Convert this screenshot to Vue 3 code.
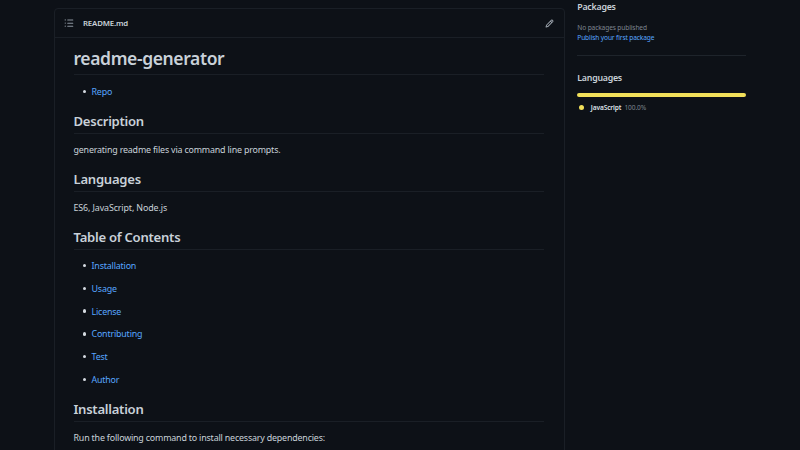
<script setup>
const contents = ['Installation', 'Usage', 'License', 'Contributing', 'Test', 'Author']
</script>

<template>
  <div class="page">
    <main class="readme">
      <header class="bar">
        <svg class="list-icon" viewBox="0 0 16 16" fill="currentColor">
          <path d="M2 4a1 1 0 100-2 1 1 0 000 2zm3.75-1.5a.75.75 0 000 1.5h8.5a.75.75 0 000-1.5h-8.5zm0 5a.75.75 0 000 1.5h8.5a.75.75 0 000-1.5h-8.5zm0 5a.75.75 0 000 1.5h8.5a.75.75 0 000-1.5h-8.5zM3 8a1 1 0 11-2 0 1 1 0 012 0zm-1 6a1 1 0 100-2 1 1 0 000 2z" />
        </svg>
        <span class="file">README.md</span>
        <svg class="pencil" viewBox="0 0 16 16" fill="currentColor">
          <path fill-rule="evenodd" d="M11.013 1.427a1.75 1.75 0 012.474 0l1.086 1.086a1.75 1.75 0 010 2.474l-8.61 8.61c-.21.21-.47.364-.756.445l-3.251.93a.75.75 0 01-.927-.928l.929-3.25a1.75 1.75 0 01.445-.758l8.61-8.61zm1.414 1.06a.25.25 0 00-.354 0L10.811 3.75l1.439 1.44 1.263-1.263a.25.25 0 000-.354l-1.086-1.086zM11.189 6.25L9.75 4.81l-6.286 6.287a.25.25 0 00-.064.108l-.558 1.953 1.953-.558a.249.249 0 00.108-.064l6.286-6.286z" />
        </svg>
      </header>
      <article class="body">
        <h1>readme-generator</h1>
        <ul class="repo"><li><a>Repo</a></li></ul>
        <h2>Description</h2>
        <p>generating readme files via command line prompts.</p>
        <h2>Languages</h2>
        <p class="stack">ES6, JavaScript, Node.js</p>
        <h2>Table of Contents</h2>
        <ul class="toc">
          <li v-for="item in contents" :key="item"><a>{{ item }}</a></li>
        </ul>
        <h2>Installation</h2>
        <p>Run the following command to install necessary dependencies:</p>
      </article>
    </main>
    <aside class="side">
      <h3>Packages</h3>
      <div class="note">No packages published</div>
      <a class="publish">Publish your first package</a>
      <div class="divider"></div>
      <h3>Languages</h3>
      <div class="meter"></div>
      <div class="lang"><i></i><b>JavaScript</b><span>100.0%</span></div>
    </aside>
  </div>
</template>

<style>
body { background: #0d1117; }
</style>

<style scoped>
.page {
  box-sizing: border-box;
  width: 800px;
  height: 450px;
  overflow: hidden;
  display: flex;
  align-items: flex-start;
  gap: 12.3px;
  padding-left: 54px;
  background: #0d1117;
  color: #c9d1d9;
  font-family: "Noto Sans", "Open Sans", sans-serif;
  font-size: 8.9px;
  letter-spacing: -0.18px;
}
h1, h2, h3, p, ul { margin: 0; padding: 0; }
a { color: #58a6ff; }
.readme {
  box-sizing: border-box;
  width: 511px;
  height: 460px;
  margin-top: 8px;
  border: 1px solid #1a1f26;
  border-radius: 4px;
  flex: none;
}
.bar {
  display: flex;
  align-items: center;
  box-sizing: border-box;
  height: 29px;
  padding: 0 10px 0 9px;
  border-bottom: 1px solid #1a1f26;
}
.list-icon { width: 10px; height: 10px; color: #8b949e; }
.file { margin-left: 9px; font-size: 7.8px; font-weight: 600; letter-spacing: -0.15px; flex: 1; }
.pencil { width: 9px; height: 9px; color: #a5adb6; }
.body { padding: 8px 20px 0 18.5px; }
h1 {
  box-sizing: border-box;
  height: 29px;
  line-height: 25px;
  font-size: 17.5px;
  font-weight: 600;
  letter-spacing: -0.38px;
  border-bottom: 1px solid #1a1f26;
}
h2 {
  box-sizing: border-box;
  height: 23px;
  line-height: 21px;
  font-size: 13.1px;
  font-weight: 600;
  letter-spacing: -0.26px;
  border-bottom: 1px solid #1a1f26;
}
p { height: 35px; line-height: 14px; padding-top: 9px; box-sizing: border-box; }
.stack { letter-spacing: -0.12px; }
ul { list-style: none; }
.repo { height: 36px; padding-top: 9.4px; box-sizing: border-box; }
.toc { height: 149px; padding-top: 8.6px; box-sizing: border-box; }
li {
  display: flex;
  align-items: center;
  gap: 5.5px;
  height: 14px;
  margin-bottom: 8.75px;
  padding-left: 9px;
}
li::before { content: ""; width: 3.5px; height: 3.5px; border-radius: 50%; background: #d5dbe1; }
.side { width: 168.7px; padding-top: 0.6px; letter-spacing: -0.12px; }
h3 { height: 13px; line-height: 13px; font-size: 8.8px; font-weight: 600; letter-spacing: -0.24px; }
.note { margin-top: 9px; height: 10px; line-height: 10px; font-size: 6.6px; color: #7d8590; }
.publish { display: block; height: 10px; line-height: 10px; font-size: 6.6px; }
.divider { margin: 12.4px 0 15.6px; height: 1px; background: #1e242b; }
.meter { margin-top: 8.4px; height: 4px; border-radius: 2px; background: #f1e05a; }
.lang { display: flex; align-items: center; margin-top: 5.4px; height: 10px; font-size: 6.6px; }
.lang i { width: 5px; height: 5px; margin: 0 6.5px 0 2px; border-radius: 50%; background: #f1e05a; }
.lang b { font-weight: 600; margin-right: 3px; color: #dde3e9; }
.lang span { color: #7d8590; }
</style>
